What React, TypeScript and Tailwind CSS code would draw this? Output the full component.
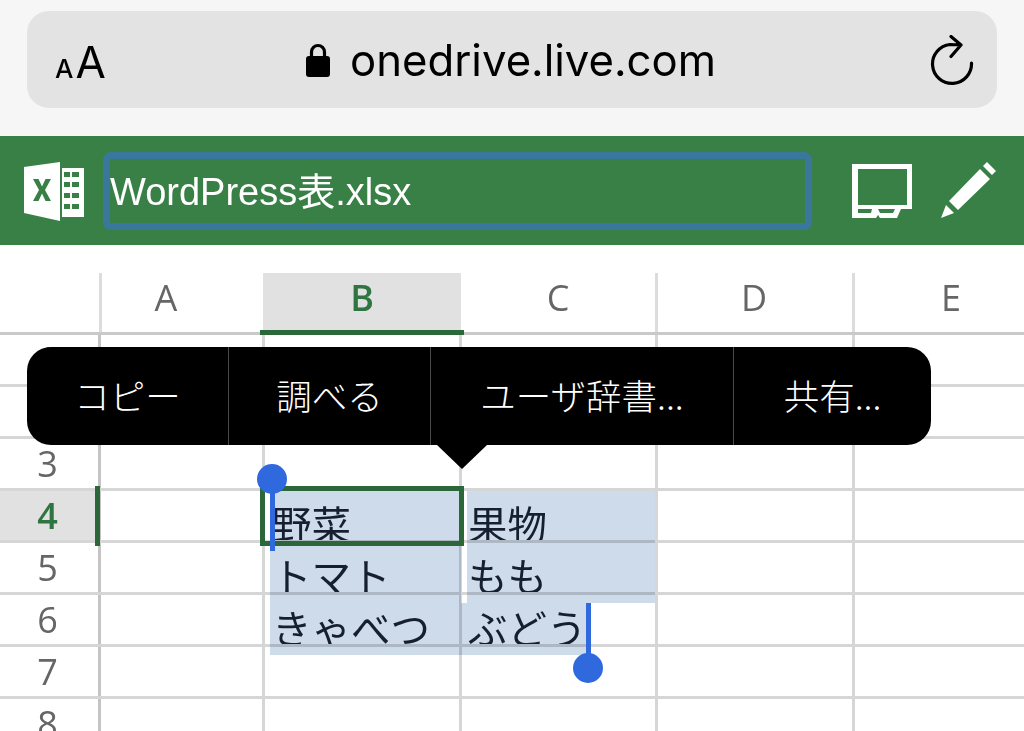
const CJK = "font-['Noto_Sans_CJK_JP',sans-serif]";

function Excel() {
  return (
    <svg width="61" height="61" viewBox="0 0 61 61" className="shrink-0">
      <path fill="#fff" d="M0 7 L36 2 V61 L0 53 Z" />
      <path fill="#fff" fillRule="evenodd" d="M38 8 H60 V57 H38 Z M40 12 V17 H46 V12 Z M48 12 V17 H55 V12 Z M40 22 V27 H46 V22 Z M48 22 V27 H55 V22 Z M40 33 V38 H46 V33 Z M48 33 V38 H55 V33 Z M40 44 V49 H46 V44 Z M48 44 V49 H55 V44 Z" />
      <path fill="#398046" d="M9 19 H14.5 L18 26.5 L21.5 19 H27 L21 30 L27 41 H21.5 L18 33.5 L14.5 41 H9 L15 30 Z" />
    </svg>
  );
}

function Row({ n, active, cells }: { n: number; active?: boolean; cells?: string[] }) {
  return (
    <div className="flex h-[52px] border-b-[3px] border-[#d6d6d6] shrink-0">
      <div className={`w-[101px] shrink-0 border-r-[3px] border-[#c4c4c4] font-['Open_Sans',sans-serif] text-[36px] leading-[49px] text-center pr-[3px] ${active ? "bg-[#e1e1e1] text-[#2f7542] font-semibold" : "text-[#666666]"}`}>
        {n}
      </div>
      <div className="w-[164px] shrink-0 border-r-[3px] border-[#d6d6d6]" />
      <div className={`w-[197px] shrink-0 border-r-[3px] border-[#d6d6d6] pl-[7px] pt-[7px] text-[39.5px] leading-[49px] text-[#1a2433] overflow-hidden whitespace-nowrap ${CJK}`}>
        {cells?.[0]}
      </div>
      <div className={`w-[196px] shrink-0 border-r-[3px] border-[#d6d6d6] pl-[6px] pt-[7px] text-[39.5px] leading-[49px] text-[#1a2433] overflow-hidden whitespace-nowrap ${CJK}`}>
        {cells?.[1]}
      </div>
      <div className="w-[197px] shrink-0 border-r-[3px] border-[#d6d6d6]" />
    </div>
  );
}

function Col({ className, label, active }: { className: string; label: string; active?: boolean }) {
  return (
    <div className={`${className} shrink-0 text-center font-['Open_Sans',sans-serif] text-[36px] leading-[50px] ${active ? "bg-[#e1e1e1] text-[#2f7542] font-semibold" : "text-[#666666]"}`}>
      {label}
    </div>
  );
}

export default function App() {
  return (
    <div className="relative w-[1024px] h-[731px] overflow-hidden bg-white font-['Liberation_Sans',sans-serif]">
      <div className="h-[136px] bg-[#f6f6f6] px-[27px] pt-[11px]">
        <div className="relative h-[97px] rounded-[22px] bg-[#e3e3e3] flex items-center text-black">
          <div className="pl-[28px] flex items-baseline font-['Inter',sans-serif] w-[279px] pt-[4px]">
            <span className="text-[26px] leading-none font-medium mr-[2px]">A</span>
            <span className="text-[44px] leading-none">A</span>
          </div>
          <svg width="24" height="36" viewBox="0 0 24 36" className="shrink-0">
            <path fill="none" stroke="#000" strokeWidth="3.2" d="M5.5 15 V10 a6.5 6.5 0 0 1 13 0 V15" />
            <rect x="0" y="14" width="24" height="21" rx="3" fill="#000" />
          </svg>
          <div className="ml-[20px] pt-[2px] font-['Inter',sans-serif] text-[43.7px] leading-none whitespace-nowrap">onedrive.live.com</div>
          <svg width="46" height="52" viewBox="0 0 46 52" className="absolute right-[22px] top-[24px]">
            <path fill="none" stroke="#000" strokeWidth="3.2" strokeLinecap="round" strokeLinejoin="round" d="M42.5 28 A19.5 19.5 0 1 1 21 9.5 L32 10 M22 1.5 L32 10 L22 21.5" />
          </svg>
        </div>
      </div>

      <div className="h-[109px] bg-[#398046] flex items-center pl-[24px]">
        <Excel />
        <div className="ml-[18px] w-[709px] h-[78px] border-[7px] border-[#3a779d] rounded-[8px] flex items-center text-white text-[38px] whitespace-nowrap">
          <span>WordPress<span className={CJK}>表</span>.xlsx</span>
        </div>
        <svg width="60" height="54" viewBox="0 0 60 54" className="ml-[40px] shrink-0">
          <path fill="#fff" fillRule="evenodd" d="M0 0 H60 V45 H49 L45 54 H28 L26 51 L24 54 H0 Z M6 5 V41 H55 V5 Z M6 45 V49 H19 L20 45 Z M26 45 L28 49 H41 L43 45 Z" />
        </svg>
        <svg width="56" height="57" viewBox="0 0 56 57" className="ml-[29px] shrink-0">
          <path fill="#fff" d="M46 0 L55 9 L51 13 L42 4 Z M39 7 L49 17 L17 48 L8 39 Z M5 43 L13 51 L0 56 Z" />
        </svg>
      </div>

      <div className="h-[28px]" />

      <div className="flex h-[62px] border-b-[3px] border-[#c9c9c9] pl-[99px]">
        <Col className="w-[164px] border-l-[3px] border-[#dcdcdc] pr-[33px]" label="A" />
        <Col className="w-[198px]" label="B" active />
        <Col className="w-[197px] border-r-[3px] border-[#dcdcdc]" label="C" />
        <Col className="w-[197px] border-r-[3px] border-[#dcdcdc] pr-[2px]" label="D" />
        <Col className="w-[170px] pl-[22px]" label="E" />
      </div>

      <Row n={1} />
      <Row n={2} />
      <Row n={3} />
      <Row n={4} active cells={["野菜", "果物"]} />
      <Row n={5} cells={["トマト", "もも"]} />
      <Row n={6} cells={["きゃべつ", "ぶどう"]} />
      <Row n={7} />
      <Row n={8} />

      {/* selection */}
      <div className="absolute left-[270px] top-[491px] w-[191px] h-[164px] bg-[#cedbea] mix-blend-multiply" />
      <div className="absolute left-[467px] top-[491px] w-[188px] h-[112px] bg-[#cedbea] mix-blend-multiply" />
      <div className="absolute left-[461px] top-[603px] w-[125px] h-[52px] bg-[#cedbea] mix-blend-multiply" />

      {/* active cell */}
      <div className="absolute left-[260px] top-[486px] w-[204px] h-[60px] border-[5px] border-[#2b6739]" />
      <div className="absolute left-[95px] top-[486px] w-[5px] h-[60px] bg-[#2b6739]" />
      <div className="absolute left-[260px] top-[330px] w-[204px] h-[5px] bg-[#2b6739]" />

      {/* handles */}
      <div className="absolute left-[270px] top-[480px] w-[5px] h-[71px] bg-[#3069de]" />
      <div className="absolute left-[257px] top-[464px] w-[30px] h-[30px] rounded-full bg-[#3069de]" />
      <div className="absolute left-[586px] top-[603px] w-[5px] h-[62px] bg-[#3069de]" />
      <div className="absolute left-[573px] top-[653px] w-[30px] h-[30px] rounded-full bg-[#3069de]" />

      {/* menu */}
      <div className={`absolute left-[27px] top-[347px] w-[904px] h-[98px] rounded-[24px] bg-black text-white flex text-[35.5px] leading-[96px] font-light ${CJK}`}>
        <div className="w-[202px] text-center border-r border-[#4a4a4a]">コピー</div>
        <div className="w-[202px] text-center border-r border-[#4a4a4a]">調べる</div>
        <div className="w-[303px] text-center border-r border-[#4a4a4a]">ユーザ辞書...</div>
        <div className="flex-1 text-center">共有...</div>
      </div>
      <svg width="50" height="24" viewBox="0 0 50 24" className="absolute left-[437px] top-[445px]">
        <path d="M0 0 H50 L25 24 Z" fill="#000" />
      </svg>
    </div>
  );
}
